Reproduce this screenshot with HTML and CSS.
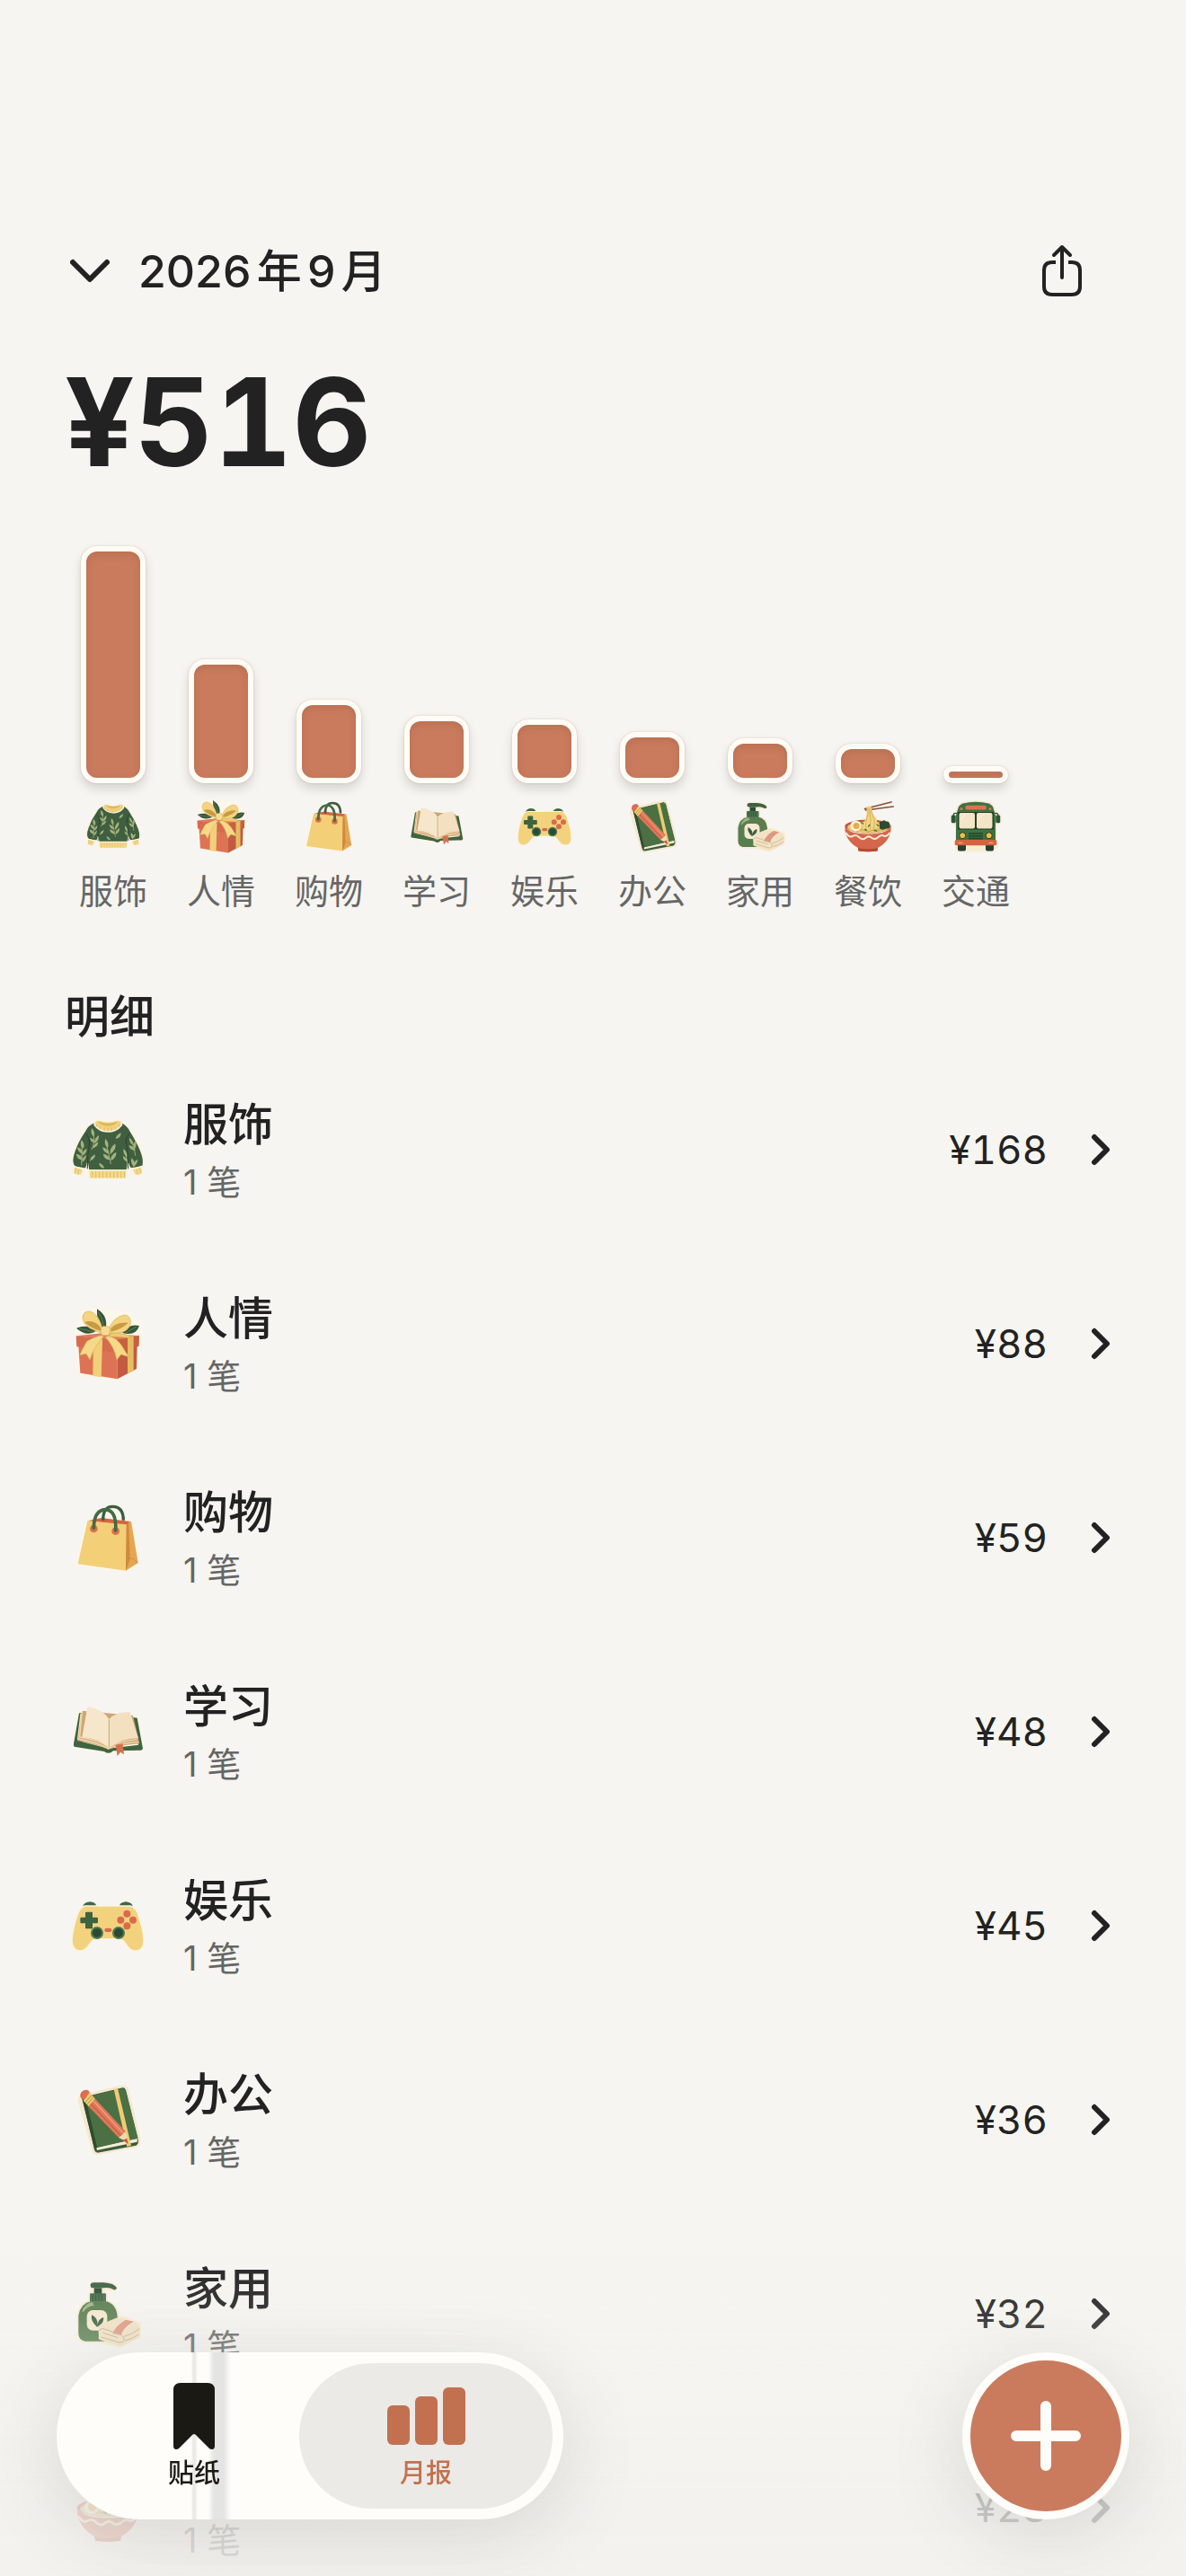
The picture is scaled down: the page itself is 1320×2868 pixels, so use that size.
FILE: index.html
```
<!DOCTYPE html>
<html lang="zh-CN">

<head>
    <meta charset="UTF-8">
    <meta name="viewport" content="width=device-width, initial-scale=1.0">
    <title>月报</title>
    <link rel="stylesheet" href="styles.css">
</head>

<body>
    <!-- category stickers -->
    <svg class="sprite" aria-hidden="true">
        <symbol id="clothes" viewBox="0 0 240 240">
            <g stroke="#fdf3df" stroke-width="5" stroke-linejoin="round">
                <path fill="#3f5f40" d="M76 28 Q52 38 44 56 Q20 90 8 126 Q0 148 2 160 Q2 172 10 178 L46 184 Q52 178 52 166 L56 190 H184 L188 166 Q190 178 196 183 L236 178 Q241 168 238 148 Q232 116 196 58 Q188 40 166 28 Q150 26 120 26 Q88 26 76 28Z" />
                <path fill="#f1d27e" d="M76 26 Q84 18 94 22 Q120 32 148 22 Q158 18 166 26 L166 38 Q148 60 120 60 Q90 58 76 38Z" />
                <path fill="#f4d98b" d="M56 189 H184 L180 216 Q120 218 58 216Z" />
                <path fill="#f4d98b" d="M6 176 L40 186 L32 206 Q18 206 4 200Z" />
                <path fill="#f4d98b" d="M200 186 L234 176 L237 200 Q224 206 210 206Z" />
            </g>
            <path fill="#dcb65f" d="M88 26 Q120 38 152 26 Q146 40 120 41 Q94 40 88 26Z" />
            <path fill="none" stroke="#2c472f" stroke-width="3" d="M60 86 Q52 130 52 184 M180 84 Q190 130 188 184 M46 64 Q58 80 60 100 M192 64 Q180 80 180 100" />
            <path fill="none" stroke="#d5b063" stroke-width="2" d="M68 192v22M80 192v23M92 192v23M104 192v23M116 192v23M128 192v23M140 192v23M152 192v23M164 192v23M176 192v22M14 180l-3 20M24 184l-4 20M226 180l3 20M216 184l4 20M84 36l-4 9M96 42l-3 10M108 45v12M120 46v12M132 45v12M144 42l3 10M156 36l4 9" />
            <g fill="none" stroke="#9fae75" stroke-width="3">
                <path d="M130 168 Q124 130 112 92M32 172 Q34 130 34 92M66 120 Q82 90 68 54M212 140 Q210 110 196 84M186 174 Q184 150 176 122" />
            </g>
            <g fill="#a3b27b">
                <path d="M112 84 q14 12 8 30 q-14 -10 -8 -30Z" />
                <path d="M102 112 q20 4 22 22 q-18 -2 -22 -22ZM104 134 q20 2 24 20 q-20 0 -24 -20ZM144 100 q8 16 -16 36 q-4 -20 16 -36ZM148 128 q2 20 -18 28 q-2 -18 18 -28Z" />
                <path d="M32 88 q14 12 6 28 q-14 -8 -6 -28ZM18 112 q18 4 18 22 q-16 -4 -18 -22ZM14 134 q20 2 22 20 q-18 0 -22 -20ZM50 116 q-2 20 -16 24 q0 -16 16 -24ZM48 138 q-2 18 -14 24 q0 -16 14 -24Z" />
                <path d="M66 48 q14 12 8 28 q-14 -8 -8 -28ZM60 80 q16 4 18 18 q-16 -2 -18 -18ZM90 72 q2 18 -14 26 q-2 -16 14 -26ZM88 94 q0 16 -18 22 q0 -14 18 -22ZM78 136 q0 16 -18 22 q2 -16 18 -22ZM164 64 q0 18 -18 20 q2 -14 18 -20Z" />
                <path d="M90 164 q16 4 18 18 q-16 -2 -18 -18ZM192 80 q14 10 14 26 q-16 -8 -14 -26ZM190 106 q18 0 22 18 q-18 -2 -22 -18ZM212 90 q6 14 -2 28 q-8 -14 2 -28ZM172 118 q14 10 12 26 q-14 -8 -12 -26ZM170 142 q14 4 16 18 q-14 -2 -16 -18ZM200 148 q14 12 6 28 q-12 -12 -6 -28ZM220 152 q-2 18 -16 26 q-2 -16 16 -26Z" />
            </g>
        </symbol>

        <symbol id="gift" viewBox="0 0 240 240">
            <path fill="#fdf6ea" stroke="#fdf6ea" stroke-width="10" stroke-linejoin="round" d="M15 90 L36 14 L84 4 L190 20 L225 60 L226 98 L218 206 L152 238 L26 218Z" />
            <g fill="#35563a">
                <path d="M84 4 Q124 30 112 72 Q82 60 84 4Z" />
                <path d="M15 68 Q50 54 84 76 Q50 100 15 68Z" />
                <path d="M225 60 Q190 52 168 84 Q214 96 225 60Z" />
            </g>
            <path fill="none" stroke="#7f9468" stroke-width="2" d="M88 14 Q104 40 108 66M24 70 Q50 74 76 82M216 64 Q194 74 178 86" />
            <path fill="#dd7355" d="M22 128 L152 142 L152 238 L28 218Z" />
            <path fill="#c35a42" d="M152 142 L218 126 L216 204 L152 238Z" />
            <path fill="#e07b5e" d="M14 94 L110 84 L225 94 L148 112 Z" />
            <path fill="#d66b4e" d="M14 94 L148 108 L148 150 L16 130Z" />
            <path fill="#c8603f" d="M148 108 L225 92 L224 128 L148 150Z" />
            <path fill="#f2d07a" d="M72 104 L102 106 L98 232 L70 228Z" />
            <path fill="#e5bd62" d="M186 98 L206 94 L206 210 L186 220Z" />
            <path fill="#f6d988" stroke="#d9ae55" stroke-width="2" d="M96 92 Q70 100 50 112 Q34 140 26 158 L48 154 L60 174 Q74 130 106 96Z" />
            <path fill="#f6d988" stroke="#d9ae55" stroke-width="2" d="M122 94 Q148 100 166 126 L190 164 L164 156 L150 174 Q142 130 112 98Z" />
            <path fill="#f0cb72" stroke="#d9ae55" stroke-width="2" d="M130 86 Q170 82 200 96 L184 100 Q150 96 122 96Z" />
            <path fill="#f4d480" stroke="#d9ae55" stroke-width="2" d="M102 70 Q90 20 60 12 Q36 10 36 36 Q40 62 76 76 Q90 82 102 86Z" />
            <path fill="#f4d480" stroke="#d9ae55" stroke-width="2" d="M124 70 Q140 30 176 24 Q198 26 196 54 Q188 80 158 84 Q140 86 124 84Z" />
            <path fill="#c99a44" d="M96 66 Q74 38 42 48 Q60 66 96 78ZM130 68 Q152 46 188 50 Q170 70 130 80Z" />
            <rect x="98" y="62" width="28" height="30" rx="8" fill="#f7dc90" stroke="#d9ae55" stroke-width="2" />
        </symbol>

        <symbol id="bag" viewBox="0 0 240 240">
            <path fill="#fdf6ea" stroke="#fdf6ea" stroke-width="12" stroke-linejoin="round" d="M52 66 L196 66 L221 204 L182 230 L22 206Z" />
            <path fill="#d4653f" d="M52 64 L98 54 L196 66 L182 78Z" />
            <path fill="none" stroke="#3c5d3b" stroke-width="10" d="M104 62 Q104 16 136 16 Q172 16 172 62" />
            <path fill="#f3cf78" d="M52 64 L182 76 L180 230 L20 208Z" />
            <path fill="#e6a651" d="M182 76 L198 66 L221 204 L180 230Z" />
            <path fill="#cf8a3c" d="M182 76 L190 72 L194 188 L180 230Z" />
            <path fill="none" stroke="#c98639" stroke-width="2" d="M194 188 L206 192 L221 204M194 188 L182 222" />
            <circle cx="73" cy="90" r="13" fill="#dc7049" />
            <circle cx="146" cy="98" r="13" fill="#dc7049" />
            <path fill="none" stroke="#456b45" stroke-width="11" stroke-linecap="round" d="M73 88 Q74 28 112 26 Q150 28 146 96" />
        </symbol>

        <symbol id="book" viewBox="0 0 240 240">
            <path fill="#fdf6ea" stroke="#fdf6ea" stroke-width="10" stroke-linejoin="round" d="M24 58 L6 168 L122 192 L236 180 L216 72Z" />
            <path fill="#3f6440" d="M24 58 L36 58 L30 152 L122 176 L222 164 L204 72 L218 74 L237 176 Q236 182 228 182 L138 184 Q124 198 108 186 L8 170 Q4 168 6 160Z" />
            <path fill="#cfa673" d="M36 50 L18 150 Q80 160 122 180 Q160 164 226 160 L204 66Z" />
            <path fill="none" stroke="#f0d9b2" stroke-width="4" d="M30 60 L20 144 Q80 154 122 176 Q160 158 222 154M34 54 L26 138 Q86 146 122 170 Q160 152 218 146" />
            <path fill="#f6e6cb" d="M52 36 Q106 46 124 78 L124 174 Q90 142 34 138Z" />
            <path fill="#f3e0c1" d="M124 78 Q146 54 194 54 L222 142 Q166 142 124 174Z" />
            <path fill="none" stroke="#c8a878" stroke-width="3" d="M124 80 V172" />
            <path fill="#d2714e" d="M146 164 L170 160 L174 196 L162 188 L152 202Z" />
        </symbol>

        <symbol id="gamepad" viewBox="0 0 240 240">
            <path fill="#3f6844" d="M36 60 Q38 40 62 40 Q82 42 82 58ZM158 58 Q158 42 180 40 Q204 42 204 60Z" />
            <path fill="#f3d27d" stroke="#fdf3df" stroke-width="4" d="M44 54 H196 Q216 60 224 92 Q240 140 240 174 Q238 204 212 204 Q196 204 184 186 L172 170 Q166 164 154 164 H86 Q74 164 68 170 L54 188 Q42 204 26 204 Q2 202 0 172 Q2 132 16 92 Q24 60 44 54Z" />
            <path fill="#3e6340" d="M48 74 h18 q3 0 3 3 v15 h15 q3 0 3 3 v14 q0 3 -3 3 h-15 v15 q0 3 -3 3 h-18 q-3 0 -3 -3 v-15 h-14 q-3 0 -3 -3 v-14 q0 -3 3 -3 h14 v-15 q0 -3 3 -3Z" />
            <g fill="#db6a4c">
                <circle cx="184" cy="80" r="12" />
                <circle cx="163" cy="101" r="12" />
                <circle cx="204" cy="101" r="12" />
                <circle cx="184" cy="121" r="12" />
                <rect x="109" y="128" width="24" height="13" rx="6" />
            </g>
            <g fill="#2a4a35" stroke="#4e7a4d" stroke-width="6">
                <circle cx="84" cy="144" r="18" />
                <circle cx="156" cy="144" r="18" />
            </g>
        </symbol>

        <symbol id="office" viewBox="0 0 240 240">
            <path fill="#f6e8d0" stroke="#f6e8d0" stroke-width="16" stroke-linejoin="round" d="M32 44 L170 12 Q180 14 182 24 L222 188 Q222 202 214 204 L84 230 Q76 228 74 218 L28 56Z" />
            <path fill="#3a5c38" d="M34 46 L170 13 Q178 14 181 24 L222 192 Q222 202 214 206 L86 230 Q78 230 75 220Z" />
            <path fill="#f3ead8" d="M82 214 L218 182 L218 194 L84 222Z" />
            <path fill="#4a7043" d="M44 46 L170 14 Q178 16 180 24 L221 182 L80 212Z" />
            <path fill="#2e4c30" d="M34 50 L46 48 L84 212 L76 218Z" />
            <path fill="#efcb74" d="M140 18 L153 15 L198 206 L184 210Z" />
            <path fill="#dd6c50" d="M28 36 Q30 22 48 20 Q56 20 60 30 L40 54 Q26 50 28 36Z" />
            <path fill="#efcb74" d="M60 30 L78 50 L56 76 L38 56Z" />
            <path fill="none" stroke="#b98a3b" stroke-width="3" d="M66 38 L45 62M72 44 L51 69" />
            <path fill="#e07758" d="M78 50 L180 160 L156 180 L56 76Z" />
            <path fill="none" stroke="#b94f38" stroke-width="3" d="M64 68 L164 174" />
            <path fill="none" stroke="#f0a184" stroke-width="4" d="M72 57 L173 167" />
            <path fill="#f1d9ae" d="M180 160 L188 196 L156 180Z" />
            <path fill="#cf5740" d="M184 182 L188 202 L170 188Z" />
        </symbol>

        <symbol id="home" viewBox="0 0 240 240">
            <path fill="#f8ecd4" stroke="#f8ecd4" stroke-width="10" stroke-linejoin="round" d="M66 26 Q60 18 72 17 H104 Q140 18 148 32 L144 40 L108 36 V52 H114 V78 Q150 88 154 130 L190 138 L226 154 L226 194 L162 228 L92 214 L40 212 Q22 206 22 180 V128 Q28 86 60 78 V52 H66Z" />
            <path fill="#3e6142" d="M62 26 Q62 16 74 16 H106 Q142 18 150 34 Q148 42 140 40 Q124 30 106 34 H72 Q62 34 62 26Z" />
            <rect x="74" y="34" width="26" height="22" fill="#2d4c35" />
            <rect x="60" y="52" width="54" height="28" rx="4" fill="#47704b" />
            <path fill="none" stroke="#31553a" stroke-width="3" d="M70 54v24M80 54v24M90 54v24M100 54v24" />
            <path fill="#587d4f" d="M64 78 H112 Q148 86 152 128 V190 Q150 208 134 212 H44 Q22 208 22 184 V126 Q28 86 64 78Z" />
            <path fill="#9cb385" d="M34 112 Q42 86 68 80 L74 92 Q50 96 38 114Z" />
            <rect x="50" y="108" width="68" height="68" rx="20" fill="#f5e9d0" />
            <path fill="#3b5e3d" d="M84 164 Q62 146 66 124 Q88 134 86 160 Q86 138 106 132 Q108 154 84 164Z" />
            <path fill="#f2e2c6" d="M88 172 Q88 158 100 154 L148 134 Q158 132 168 136 L216 150 Q226 156 226 168 V194 Q226 200 216 204 L170 226 Q160 230 150 226 L96 208 Q86 204 90 194Z" />
            <path fill="#df9880" d="M136 186 Q146 160 180 140 L206 146 Q172 164 164 192Z" />
            <path fill="none" stroke="#c9b18c" stroke-width="3" d="M90 178 Q96 166 110 172 L158 188 Q174 192 174 208 Q172 218 158 216 L98 198M104 184 L154 200M174 196 Q200 190 226 170M176 210 Q206 204 224 188" />
        </symbol>

        <symbol id="food" viewBox="0 0 240 240">
            <path fill="none" stroke="#8a4e35" stroke-width="7" stroke-linecap="round" d="M106 42 L224 12M110 48 L232 32" />
            <ellipse cx="120" cy="120" rx="103" ry="30" fill="#c5523a" />
            <ellipse cx="120" cy="124" rx="92" ry="26" fill="#ecc96d" />
            <path fill="#f3d684" d="M114 34 Q128 24 136 36 Q134 60 158 84 Q164 110 156 134 L100 134 Q96 110 110 86 Q118 60 114 34Z" />
            <path fill="none" stroke="#cf9f46" stroke-width="3" d="M120 38 Q124 66 112 96 Q108 112 112 132M128 36 Q126 66 132 92 Q128 112 130 134M134 48 Q138 70 148 88 Q152 112 144 132M50 138 Q80 120 102 140M64 144 Q100 126 124 146M120 146 Q160 124 196 136M150 146 Q176 132 208 130" />
            <path fill="#2c4b32" d="M172 112 Q166 96 182 100 Q190 88 200 98 Q218 96 216 112 Q220 130 202 130 Q180 140 172 128Z" />
            <circle cx="66" cy="118" r="24" fill="#fdf3e0" />
            <circle cx="68" cy="118" r="14" fill="#eda943" />
            <path fill="none" stroke="#4b7a41" stroke-width="6" stroke-linecap="round" d="M90 102 l8 6M122 120 l6 -6M148 138 l10 2M106 134 l8 4M160 112 l8 6" />
            <path fill="#d4664c" d="M17 124 Q40 154 120 154 Q200 154 223 124 Q222 184 164 216 L162 230 Q120 236 78 230 L76 216 Q18 184 17 124Z" />
            <path fill="none" stroke="#fbe9d2" stroke-width="8" stroke-linejoin="round" d="M22 148 Q36 172 52 164 Q68 154 82 170 Q98 184 112 170 Q124 160 138 172 Q152 182 166 168 Q182 154 194 164 Q206 166 218 148" />
            <path fill="#b9482f" d="M76 216 Q120 226 164 216 L162 230 Q120 236 78 230Z" />
        </symbol>

        <symbol id="bus" viewBox="0 0 240 240">
            <path fill="#f8ecd4" stroke="#f8ecd4" stroke-width="12" stroke-linejoin="round" d="M44 30 Q60 12 120 10 Q180 12 196 30 L208 60 L226 72 V102 L208 110 V180 L214 204 L196 228 H44 L28 204 L34 180 V110 L14 102 V72 L34 60Z" />
            <path fill="#26402c" d="M40 200 h36 v22 q0 8 -8 8 h-20 q-8 0 -8 -8ZM164 200 h36 v22 q0 8 -8 8 h-20 q-8 0 -8 -8Z" />
            <path fill="none" stroke="#2c4b32" stroke-width="5" d="M36 62 Q22 58 20 72M204 62 Q218 58 220 72" />
            <rect x="11" y="70" width="20" height="35" rx="6" fill="#2f5535" />
            <rect x="209" y="70" width="20" height="35" rx="6" fill="#2f5535" />
            <path fill="#3f7240" d="M44 32 Q56 12 120 11 Q184 12 196 32 L208 70 V186 H32 V70Z" />
            <rect x="74" y="27" width="93" height="19" rx="7" fill="#dd7350" />
            <circle cx="56" cy="42" r="6" fill="#dd7350" />
            <circle cx="184" cy="42" r="6" fill="#dd7350" />
            <path fill="#234028" d="M40 56 H200 V134 H40Z" />
            <rect x="46" y="60" width="70" height="70" rx="8" fill="#f3e5c8" />
            <rect x="124" y="60" width="70" height="70" rx="8" fill="#f3e5c8" />
            <path stroke="#fff9ea" stroke-width="4" d="M54 88 L74 68M132 88 L152 68" />
            <path stroke="#234028" stroke-width="6" d="M88 152 H152M88 163 H152M88 174 H152" />
            <g fill="#f0bd45" stroke="#234028" stroke-width="4">
                <circle cx="61" cy="161" r="14" />
                <circle cx="179" cy="161" r="14" />
            </g>
            <rect x="27" y="180" width="186" height="25" rx="7" fill="#d5633f" />
            <path stroke="#f3a68a" stroke-width="5" stroke-linecap="round" d="M44 193 h16M180 193 h16" />
        </symbol>

        <symbol id="chevron" viewBox="0 0 22 36">
            <path fill="none" stroke="currentColor" stroke-width="6" stroke-linecap="round" stroke-linejoin="round" d="M4 4 L18 18 L4 32" />
        </symbol>
    </svg>

    <main class="page">
        <header class="header">
            <button type="button" class="month">
                <svg class="month-arrow" viewBox="0 0 44 28" aria-hidden="true">
                    <path fill="none" stroke="currentColor" stroke-width="6" stroke-linecap="round" stroke-linejoin="round" d="M3 4 L22 23 L41 4" />
                </svg>
                2026年9月
            </button>
            <button type="button" class="share" aria-label="分享">
                <svg viewBox="0 0 48 60" aria-hidden="true">
                    <g fill="none" stroke="currentColor" stroke-width="4">
                        <path d="M17 20 H13 Q4 20 4 29 V47 Q4 56 13 56 H35 Q44 56 44 47 V29 Q44 20 35 20 H31" />
                        <path stroke-linecap="round" stroke-linejoin="round" d="M24 37 V3 M15 12 L24 3 L33 12" />
                    </g>
                </svg>
            </button>
        </header>

        <h1 class="total">¥516</h1>

        <ul class="chart">
            <li><span class="bars"><span class="bar" style="height: 264px"></span></span><svg class="sticker"><use href="#clothes" /></svg>服饰</li>
            <li><span class="bars"><span class="bar" style="height: 138px"></span></span><svg class="sticker"><use href="#gift" /></svg>人情</li>
            <li><span class="bars"><span class="bar" style="height: 93px"></span></span><svg class="sticker"><use href="#bag" /></svg>购物</li>
            <li><span class="bars"><span class="bar" style="height: 75px"></span></span><svg class="sticker"><use href="#book" /></svg>学习</li>
            <li><span class="bars"><span class="bar" style="height: 71px"></span></span><svg class="sticker"><use href="#gamepad" /></svg>娱乐</li>
            <li><span class="bars"><span class="bar" style="height: 57px"></span></span><svg class="sticker"><use href="#office" /></svg>办公</li>
            <li><span class="bars"><span class="bar" style="height: 50px"></span></span><svg class="sticker"><use href="#home" /></svg>家用</li>
            <li><span class="bars"><span class="bar" style="height: 44px"></span></span><svg class="sticker"><use href="#food" /></svg>餐饮</li>
            <li><span class="bars"><span class="bar" style="height: 19px"></span></span><svg class="sticker"><use href="#bus" /></svg>交通</li>
        </ul>

        <h2 class="section-title">明细</h2>
        <ul class="list">
            <li>
                <a class="row" href="#clothes">
                    <svg class="row-icon"><use href="#clothes" /></svg>
                    <span class="row-text"><span class="name">服饰</span><span class="count">1 笔</span></span>
                    <span class="amount">¥168</span>
                    <svg class="row-arrow"><use href="#chevron" /></svg>
                </a>
            </li>
            <li>
                <a class="row" href="#gift">
                    <svg class="row-icon"><use href="#gift" /></svg>
                    <span class="row-text"><span class="name">人情</span><span class="count">1 笔</span></span>
                    <span class="amount">¥88</span>
                    <svg class="row-arrow"><use href="#chevron" /></svg>
                </a>
            </li>
            <li>
                <a class="row" href="#bag">
                    <svg class="row-icon"><use href="#bag" /></svg>
                    <span class="row-text"><span class="name">购物</span><span class="count">1 笔</span></span>
                    <span class="amount">¥59</span>
                    <svg class="row-arrow"><use href="#chevron" /></svg>
                </a>
            </li>
            <li>
                <a class="row" href="#book">
                    <svg class="row-icon"><use href="#book" /></svg>
                    <span class="row-text"><span class="name">学习</span><span class="count">1 笔</span></span>
                    <span class="amount">¥48</span>
                    <svg class="row-arrow"><use href="#chevron" /></svg>
                </a>
            </li>
            <li>
                <a class="row" href="#gamepad">
                    <svg class="row-icon"><use href="#gamepad" /></svg>
                    <span class="row-text"><span class="name">娱乐</span><span class="count">1 笔</span></span>
                    <span class="amount">¥45</span>
                    <svg class="row-arrow"><use href="#chevron" /></svg>
                </a>
            </li>
            <li>
                <a class="row" href="#office">
                    <svg class="row-icon"><use href="#office" /></svg>
                    <span class="row-text"><span class="name">办公</span><span class="count">1 笔</span></span>
                    <span class="amount">¥36</span>
                    <svg class="row-arrow"><use href="#chevron" /></svg>
                </a>
            </li>
            <li>
                <a class="row" href="#home">
                    <svg class="row-icon"><use href="#home" /></svg>
                    <span class="row-text"><span class="name">家用</span><span class="count">1 笔</span></span>
                    <span class="amount">¥32</span>
                    <svg class="row-arrow"><use href="#chevron" /></svg>
                </a>
            </li>
            <li>
                <a class="row" href="#food">
                    <svg class="row-icon"><use href="#food" /></svg>
                    <span class="row-text"><span class="name">餐饮</span><span class="count">1 笔</span></span>
                    <span class="amount">¥28</span>
                    <svg class="row-arrow"><use href="#chevron" /></svg>
                </a>
            </li>
        </ul>
    </main>

    <div class="bottom">
        <nav class="tabs">
            <a class="tab" href="#stickers">
                <svg viewBox="0 0 96 76" aria-hidden="true">
                    <path fill="currentColor" d="M25 9 Q25 1 33 1 H63 Q71 1 71 9 V71 Q71 75 68 75 Q66 75 65 74 L50 59 Q48 57 46 59 L31 74 Q30 75 28 75 Q25 75 25 71Z" />
                </svg>
                贴纸
            </a>
            <a class="tab active" href="#report" aria-current="page">
                <svg viewBox="0 0 96 76" aria-hidden="true">
                    <g fill="currentColor">
                        <rect x="5" y="26" width="25" height="44" rx="6" />
                        <rect x="36" y="16" width="25" height="54" rx="6" />
                        <rect x="67" y="6" width="25" height="64" rx="6" />
                    </g>
                </svg>
                月报
            </a>
        </nav>
        <button type="button" class="add" aria-label="记一笔">
            <svg viewBox="0 0 78 78" aria-hidden="true">
                <path stroke="currentColor" stroke-width="12" stroke-linecap="round" d="M39 6 V72 M6 39 H72" />
            </svg>
        </button>
    </div>
</body>

</html>
```
FILE: styles.css
```
* {
    box-sizing: border-box;
}

body {
    margin: 0;
    font-family: Inter, "Noto Sans CJK SC", sans-serif;
    background-color: #f6f5f1;
    color: #222;
}

ul {
    list-style: none;
    margin: 0;
    padding: 0;
}

a {
    color: inherit;
    text-decoration: none;
}

button {
    font: inherit;
    color: inherit;
    background: none;
    border: none;
    padding: 0;
    cursor: pointer;
}

.sprite {
    display: none;
}

.page {
    height: 100vh;
    overflow-x: hidden;
    overflow-y: auto;
    scrollbar-width: none;
    padding: 272px 72px 0;
}

.header {
    display: flex;
    justify-content: space-between;
    align-items: center;
    height: 60px;
    padding: 0 42px 0 6px;
}

.month {
    display: flex;
    align-items: center;
    gap: 32px;
    font-size: 50px;
    font-weight: 500;
    line-height: 60px;
    text-autospace: normal;
}

.month-arrow {
    width: 44px;
    height: 28px;
}

.share svg {
    display: block;
    width: 48px;
    height: 60px;
}

.total {
    margin: 72px 0;
    font-size: 136px;
    font-weight: 700;
    line-height: 132px;
    font-variant-numeric: tabular-nums;
}

/* bar chart */
.chart {
    display: flex;
    gap: 12px;
}

.chart li {
    width: 108px;
    display: flex;
    flex-direction: column;
    align-items: center;
    gap: 18px;
    font-size: 38px;
    line-height: 48px;
    color: #666;
}

.bars {
    height: 264px;
    display: flex;
    align-items: flex-end;
}

.bar {
    width: 72px;
    background-color: #ca7b5d;
    border: 6px solid #fffcf6;
    border-radius: 18px;
    box-shadow: 0 6px 12px rgba(0, 0, 0, 0.14), 0 0 2px rgba(202, 123, 93, 0.4), inset 0 3px 9px rgba(120, 70, 50, 0.2);
}

.sticker {
    width: 60px;
    height: 60px;
}

/* details */
.section-title {
    margin: 86px 0 10px;
    font-size: 50px;
    font-weight: 500;
    line-height: 60px;
}

.row {
    display: flex;
    align-items: center;
    height: 216px;
    padding: 0 12px 0 8px;
}

.row-icon {
    width: 80px;
    height: 80px;
    margin-right: 44px;
}

.row-text {
    flex: 1;
    display: flex;
    flex-direction: column;
    gap: 10px;
    padding-top: 2px;
}

.name {
    font-size: 50px;
    font-weight: 500;
    line-height: 60px;
}

.count {
    font-size: 38px;
    line-height: 48px;
    color: #666;
}

.amount {
    font-size: 44px;
    font-variant-numeric: tabular-nums;
    margin-right: 48px;
}

.row-arrow {
    width: 22px;
    height: 36px;
}

/* floating bar */
.bottom {
    position: fixed;
    left: 0;
    right: 0;
    bottom: 0;
    display: flex;
    justify-content: space-between;
    padding: 119px 63px 63px;
    background: linear-gradient(rgba(244, 243, 239, 0), rgba(243, 242, 238, 0.12) 20%, rgba(243, 242, 238, 0.3) 34%, rgba(242, 241, 237, 0.8) 78%, rgba(242, 241, 237, 0.85));
}

.tabs {
    display: flex;
    padding: 12px;
    border-radius: 93px;
    /* blurred text showing through the glass */
    background: linear-gradient(90deg, transparent 150px, #e9e9e6 152px, #e9e9e6 154px, transparent 157px, transparent 169px, #e4e4e3 175px, #e4e4e3 186px, transparent 194px), #fefdf9;
    box-shadow: 0 18px 90px rgba(0, 0, 0, 0.12);
}

.tab {
    width: 282px;
    height: 162px;
    border-radius: 81px;
    display: flex;
    flex-direction: column;
    align-items: center;
    justify-content: center;
    gap: 8px;
    font-size: 29px;
    font-weight: 500;
    line-height: 36px;
    color: #1a1914;
}

.tab + .tab {
    margin-left: -24px;
}

.tab svg {
    width: 96px;
    height: 76px;
}

.tab.active {
    background-color: #ebeae6;
    color: #c27150;
}

.add {
    width: 186px;
    height: 186px;
    display: flex;
    align-items: center;
    justify-content: center;
    border: 9px solid #fefdf9;
    border-radius: 50%;
    background-color: #ca7b5d;
    color: #fefdf9;
    box-shadow: 0 18px 90px rgba(0, 0, 0, 0.12);
}

.add svg {
    width: 78px;
    height: 78px;
}
```
